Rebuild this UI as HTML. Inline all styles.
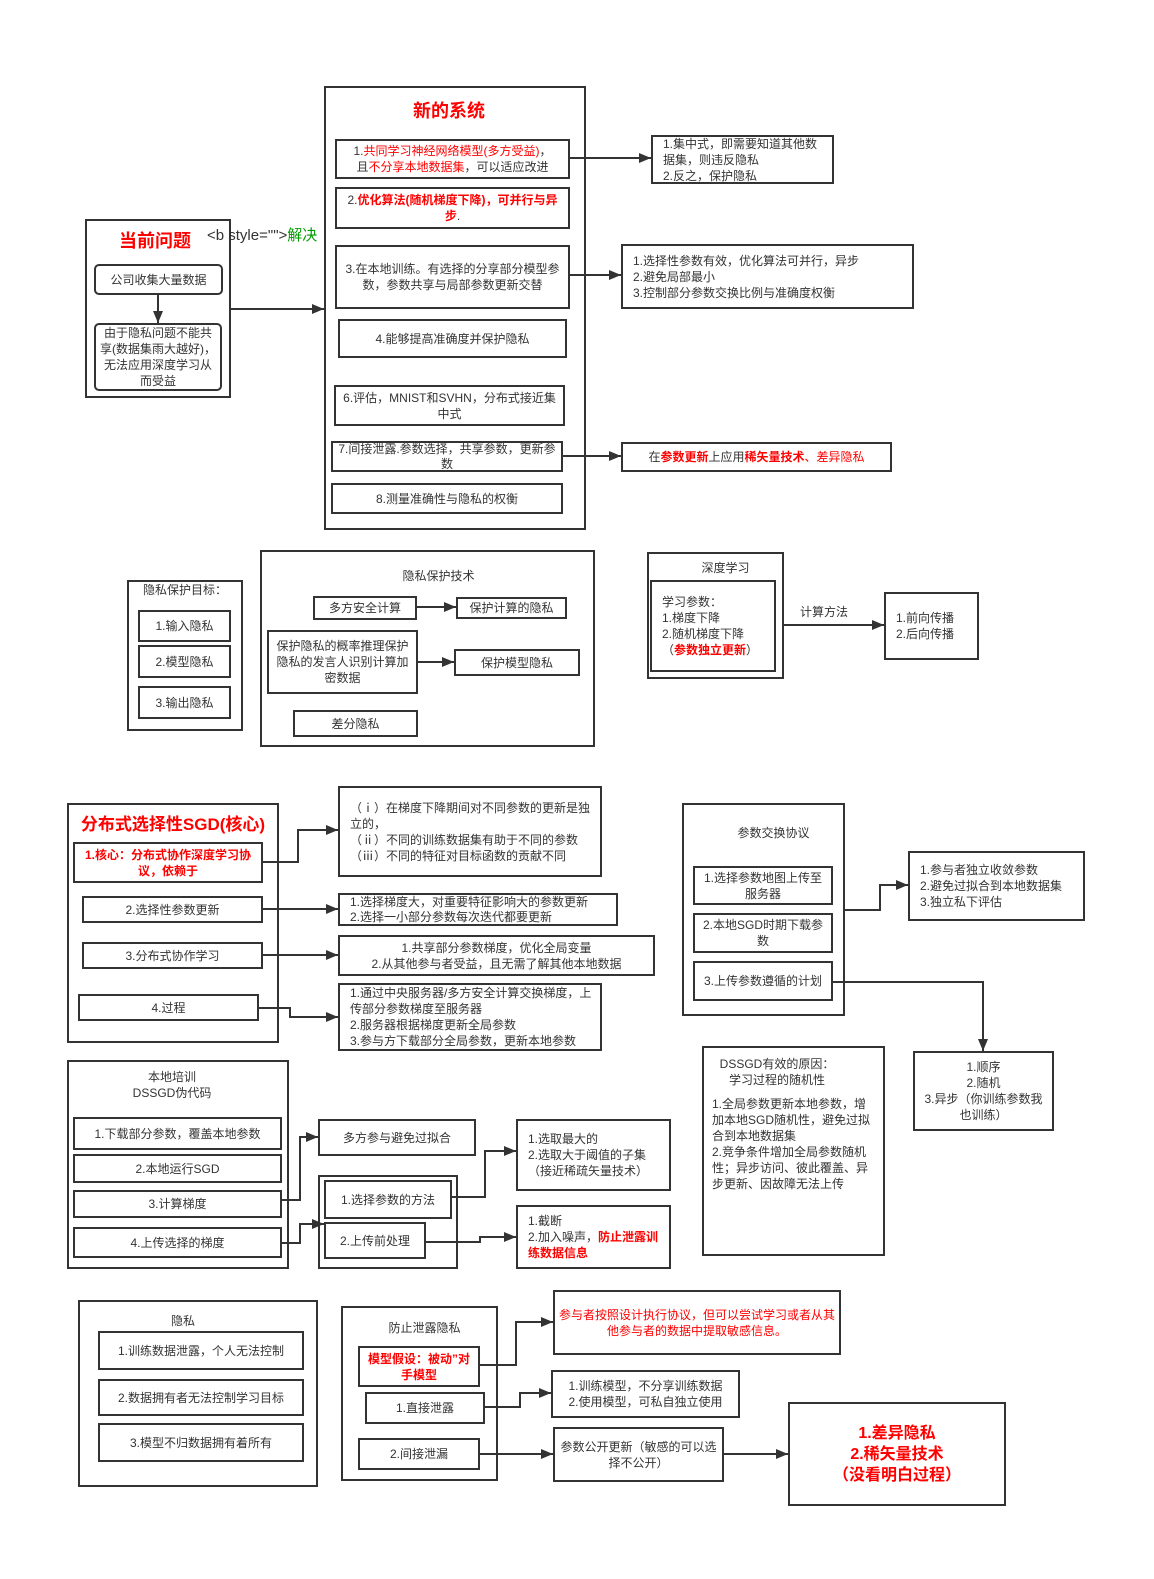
<!DOCTYPE html>
<html><head><meta charset="utf-8"><style>
body{margin:0;background:#fff;}
#c{position:relative;width:1154px;height:1579px;overflow:hidden;font-family:"Liberation Sans","Noto Sans CJK SC",sans-serif;font-size:12px;color:#333;line-height:16px;}
.b{position:absolute;box-sizing:border-box;border:2px solid #333;display:flex;align-items:center;justify-content:center;text-align:center;padding:0 4px;background:#fff;}
.o{position:absolute;box-sizing:border-box;border:2px solid #333;}
.l{justify-content:flex-start;text-align:left;padding-left:10px;}
.r{border-radius:5px;}
.t{position:absolute;text-align:center;}
.red{color:#f00;}
.rb{color:#f00;font-weight:bold;}
svg{position:absolute;left:0;top:0;}
</style></head><body><div id="c">

<!-- 新的系统 -->
<div class="o" style="left:324px;top:86px;width:262px;height:444px"></div>
<div class="t rb" style="left:324px;top:99px;width:250px;font-size:18px;line-height:24px">新的系统</div>
<div class="b" style="left:335px;top:139px;width:235px;height:40px"><div>1.<span class="red">共同学习神经网络模型(多方受益)</span>，<br>且<span class="red">不分享本地数据集</span>，可以适应改进</div></div>
<div class="b" style="left:335px;top:187px;width:235px;height:42px"><div>2.<b class="rb">优化算法(随机梯度下降)，可并行与异步</b>.</div></div>
<div class="b" style="left:335px;top:245px;width:235px;height:64px">3.在本地训练。有选择的分享部分模型参数，参数共享与局部参数更新交替</div>
<div class="b" style="left:338px;top:319px;width:229px;height:39px">4.能够提高准确度并保护隐私</div>
<div class="b" style="left:334px;top:385px;width:231px;height:41px">6.评估，MNIST和SVHN，分布式接近集中式</div>
<div class="b" style="left:331px;top:441px;width:232px;height:31px;line-height:15px">7.间接泄露.参数选择，共享参数，更新参数</div>
<div class="b" style="left:331px;top:483px;width:232px;height:31px">8.测量准确性与隐私的权衡</div>
<div class="b l" style="left:651px;top:135px;width:183px;height:49px">1.集中式，即需要知道其他数据集，则违反隐私<br>2.反之，保护隐私</div>
<div class="b l" style="left:621px;top:244px;width:293px;height:65px">1.选择性参数有效，优化算法可并行，异步<br>2.避免局部最小<br>3.控制部分参数交换比例与准确度权衡</div>
<div class="b" style="left:621px;top:442px;width:271px;height:30px"><div>在<b class="rb">参数更新</b>上应用<b class="rb">稀矢量技术</b><span class="red">、差异隐私</span></div></div>

<!-- 当前问题 -->
<div class="o" style="left:85px;top:219px;width:146px;height:179px"></div>
<div class="t rb" style="left:85px;top:229px;width:140px;font-size:18px;line-height:24px">当前问题</div>
<div class="t" style="left:207px;top:227px;font-size:15px;white-space:nowrap;line-height:18px">&lt;b style=""&gt;<span style="color:#090">解决</span></div>
<div class="b r" style="left:94px;top:264px;width:129px;height:31px">公司收集大量数据</div>
<div class="b r" style="left:94px;top:323px;width:128px;height:68px;line-height:16px">由于隐私问题不能共享(数据集雨大越好)，无法应用深度学习从而受益</div>

<!-- 隐私保护目标 -->
<div class="o" style="left:127px;top:580px;width:116px;height:151px"></div>
<div class="t" style="left:127px;top:582px;width:116px">隐私保护目标：</div>
<div class="b" style="left:138px;top:610px;width:93px;height:32px">1.输入隐私</div>
<div class="b" style="left:138px;top:645px;width:93px;height:33px">2.模型隐私</div>
<div class="b" style="left:138px;top:686px;width:93px;height:33px">3.输出隐私</div>

<!-- 隐私保护技术 -->
<div class="o" style="left:260px;top:550px;width:335px;height:197px"></div>
<div class="t" style="left:260px;top:568px;width:357px">隐私保护技术</div>
<div class="b" style="left:313px;top:596px;width:104px;height:24px">多方安全计算</div>
<div class="b" style="left:456px;top:597px;width:111px;height:22px">保护计算的隐私</div>
<div class="b" style="left:267px;top:630px;width:151px;height:64px">保护隐私的概率推理保护隐私的发言人识别计算加密数据</div>
<div class="b" style="left:454px;top:649px;width:126px;height:27px">保护模型隐私</div>
<div class="b" style="left:293px;top:710px;width:125px;height:27px">差分隐私</div>

<!-- 深度学习 -->
<div class="o" style="left:647px;top:552px;width:137px;height:127px"></div>
<div class="t" style="left:647px;top:560px;width:157px">深度学习</div>
<div class="b l" style="left:650px;top:580px;width:126px;height:92px;align-items:center"><div>学习参数：<br>1.梯度下降<br>2.随机梯度下降<br>（<b class="rb">参数独立更新</b>）</div></div>
<div class="t" style="left:800px;top:604px;background:#fff">计算方法</div>
<div class="b l" style="left:884px;top:592px;width:95px;height:68px">1.前向传播<br>2.后向传播</div>

<!-- SGD -->
<div class="o" style="left:67px;top:803px;width:212px;height:240px"></div>
<div class="t rb" style="left:67px;top:814px;width:212px;font-size:17px;line-height:22px">分布式选择性SGD(核心)</div>
<div class="b rb" style="left:73px;top:842px;width:190px;height:41px">1.核心：分布式协作深度学习协议，依赖于</div>
<div class="b" style="left:82px;top:896px;width:181px;height:27px">2.选择性参数更新</div>
<div class="b" style="left:82px;top:942px;width:181px;height:27px">3.分布式协作学习</div>
<div class="b" style="left:78px;top:994px;width:181px;height:27px">4.过程</div>
<div class="b l" style="left:338px;top:786px;width:264px;height:91px"><div>（ⅰ）在梯度下降期间对不同参数的更新是独立的，<br>（ⅱ）不同的训练数据集有助于不同的参数<br>（ⅲ）不同的特征对目标函数的贡献不同</div></div>
<div class="b l" style="left:338px;top:893px;width:280px;height:33px;line-height:15px"><div>1.选择梯度大，对重要特征影响大的参数更新<br>2.选择一小部分参数每次迭代都要更新</div></div>
<div class="b" style="left:338px;top:935px;width:317px;height:41px"><div>1.共享部分参数梯度，优化全局变量<br>2.从其他参与者受益，且无需了解其他本地数据</div></div>
<div class="b l" style="left:338px;top:983px;width:264px;height:68px"><div>1.通过中央服务器/多方安全计算交换梯度，上传部分参数梯度至服务器<br>2.服务器根据梯度更新全局参数<br>3.参与方下载部分全局参数，更新本地参数</div></div>

<!-- 参数交换协议 -->
<div class="o" style="left:682px;top:803px;width:163px;height:213px"></div>
<div class="t" style="left:682px;top:825px;width:183px">参数交换协议</div>
<div class="b" style="left:693px;top:866px;width:140px;height:39px">1.选择参数地图上传至服务器</div>
<div class="b" style="left:693px;top:913px;width:140px;height:40px">2.本地SGD时期下载参数</div>
<div class="b" style="left:693px;top:961px;width:140px;height:40px">3.上传参数遵循的计划</div>
<div class="b l" style="left:908px;top:851px;width:177px;height:70px"><div>1.参与者独立收敛参数<br>2.避免过拟合到本地数据集<br>3.独立私下评估</div></div>
<div class="b" style="left:913px;top:1051px;width:141px;height:80px"><div>1.顺序<br>2.随机<br>3.异步（你训练参数我也训练）</div></div>
<div class="o" style="left:702px;top:1046px;width:183px;height:210px"></div>
<div class="t" style="left:702px;top:1056px;width:150px">DSSGD有效的原因：<br>学习过程的随机性</div>
<div class="t" style="left:712px;top:1096px;width:162px;text-align:left">1.全局参数更新本地参数，增加本地SGD随机性，避免过拟合到本地数据集<br>2.竞争条件增加全局参数随机性；异步访问、彼此覆盖、异步更新、因故障无法上传</div>

<!-- 本地培训 -->
<div class="o" style="left:67px;top:1060px;width:222px;height:209px"></div>
<div class="t" style="left:67px;top:1069px;width:210px">本地培训<br>DSSGD伪代码</div>
<div class="b" style="left:73px;top:1117px;width:209px;height:33px">1.下载部分参数，覆盖本地参数</div>
<div class="b" style="left:73px;top:1154px;width:209px;height:29px">2.本地运行SGD</div>
<div class="b" style="left:73px;top:1190px;width:209px;height:28px">3.计算梯度</div>
<div class="b" style="left:73px;top:1227px;width:209px;height:31px">4.上传选择的梯度</div>
<div class="b" style="left:318px;top:1119px;width:158px;height:37px">多方参与避免过拟合</div>
<div class="o" style="left:318px;top:1175px;width:140px;height:94px"></div>
<div class="b" style="left:324px;top:1180px;width:128px;height:39px">1.选择参数的方法</div>
<div class="b" style="left:324px;top:1222px;width:102px;height:37px">2.上传前处理</div>
<div class="b l" style="left:516px;top:1119px;width:155px;height:72px"><div>1.选取最大的<br>2.选取大于阈值的子集<br>（接近稀疏矢量技术）</div></div>
<div class="b l" style="left:516px;top:1205px;width:155px;height:64px;padding-right:2px"><div>1.截断<br>2.加入噪声，<b class="rb">防止泄露训练数据信息</b></div></div>

<!-- 隐私 -->
<div class="o" style="left:78px;top:1300px;width:240px;height:187px"></div>
<div class="t" style="left:78px;top:1313px;width:210px">隐私</div>
<div class="b" style="left:98px;top:1331px;width:206px;height:39px">1.训练数据泄露，个人无法控制</div>
<div class="b" style="left:98px;top:1379px;width:206px;height:37px">2.数据拥有者无法控制学习目标</div>
<div class="b" style="left:98px;top:1423px;width:206px;height:39px">3.模型不归数据拥有着所有</div>

<!-- 防止泄露隐私 -->
<div class="o" style="left:341px;top:1306px;width:157px;height:175px"></div>
<div class="t" style="left:341px;top:1320px;width:167px">防止泄露隐私</div>
<div class="b rb" style="left:358px;top:1346px;width:122px;height:41px">模型假设：被动”对手模型</div>
<div class="b" style="left:365px;top:1392px;width:120px;height:32px">1.直接泄露</div>
<div class="b" style="left:358px;top:1438px;width:122px;height:32px">2.间接泄漏</div>
<div class="b red" style="left:553px;top:1290px;width:288px;height:65px">参与者按照设计执行协议，但可以尝试学习或者从其他参与者的数据中提取敏感信息。</div>
<div class="b" style="left:551px;top:1370px;width:189px;height:48px"><div>1.训练模型，不分享训练数据<br>2.使用模型，可私自独立使用</div></div>
<div class="b" style="left:553px;top:1427px;width:171px;height:55px">参数公开更新（敏感的可以选择不公开）</div>
<div class="b rb" style="left:788px;top:1402px;width:218px;height:104px;font-size:16px;line-height:21px"><div>1.差异隐私<br>2.稀矢量技术<br>（没看明白过程）</div></div>

<svg width="1154" height="1579">
<defs><marker id="a" markerWidth="12" markerHeight="10" refX="12" refY="5" orient="auto" markerUnits="userSpaceOnUse"><path d="M0,0 L12,5 L0,10z" fill="#333"/></marker></defs>
<g stroke="#333" stroke-width="2" fill="none" marker-end="url(#a)">
<path d="M570,158H651"/>
<path d="M570,275H621"/>
<path d="M563,456H621"/>
<path d="M158,295V323"/>
<path d="M231,309H324"/>
<path d="M417,607H456"/>
<path d="M418,662H454"/>
<path d="M784,625H884"/>
<path d="M263,862H298V830H338"/>
<path d="M263,909H338"/>
<path d="M263,955H338"/>
<path d="M259,1008H290V1017H338"/>
<path d="M845,910H880V885H908"/>
<path d="M833,982H983V1051"/>
<path d="M282,1200H300V1137H318"/>
<path d="M282,1243H300V1224H324"/>
<path d="M452,1197H485V1151H516"/>
<path d="M426,1242H480V1237H516"/>
<path d="M480,1365H516V1322H553"/>
<path d="M485,1407H520V1393H551"/>
<path d="M480,1454H553"/>
<path d="M724,1454H788"/>
</g>
</svg>
</div></body></html>
